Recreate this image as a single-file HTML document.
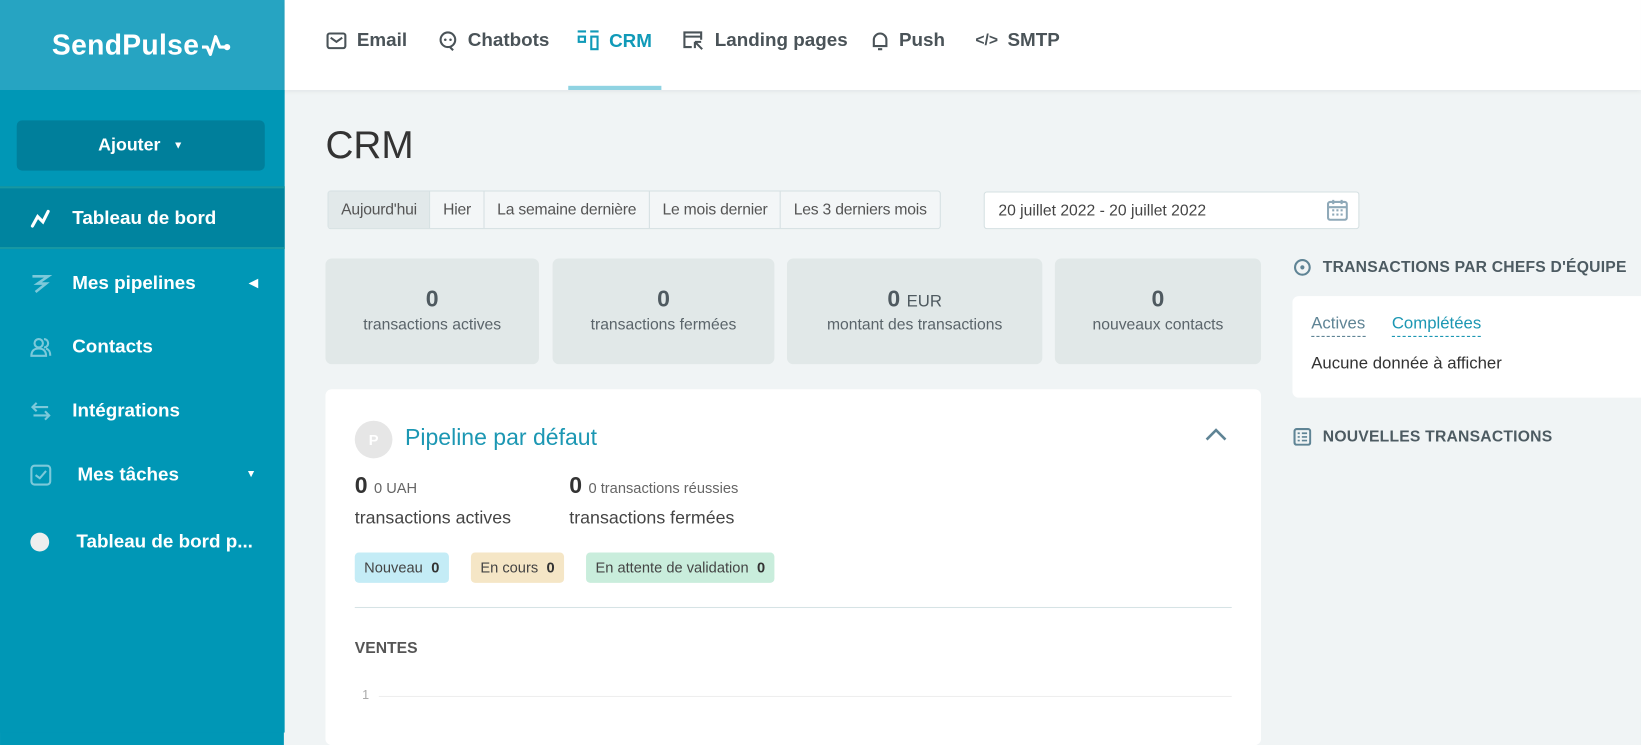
<!DOCTYPE html>
<html><head><meta charset="utf-8"><style>
*{box-sizing:border-box;margin:0;padding:0}
html,body{width:1641px;height:712px;overflow:hidden;background:linear-gradient(to right,#0097b6 0,#0097b6 284px,#f0f4f5 284px)}
body{font-family:"Liberation Sans",sans-serif}
#w{position:absolute;left:0;top:0;width:1568px;height:681px;transform:scale(1.0465);transform-origin:0 0}
.sb{position:absolute;left:0;top:0;width:272px;height:700px;background:#0097b6}
.logo{height:86px;background:#26a4c2;color:#fff;font-weight:bold;font-size:27px;display:flex;align-items:center;justify-content:center;letter-spacing:0.3px}
.add{position:absolute;left:16px;top:115px;width:237px;height:48px;background:#007f9b;border-radius:5px;color:#fff;font-weight:bold;font-size:17px;display:flex;align-items:center;justify-content:center}
.item{position:absolute;left:0;width:272px;height:60px;color:#fff;font-weight:bold;font-size:18px;display:flex;align-items:center}
.item .ic{position:absolute;left:28px;top:20px}
.item span{position:absolute;left:69px}
.act{background:#00849f;border-top:2px solid #1798a3;border-bottom:2px solid #1798a3}
.top{position:absolute;left:272px;top:0;width:1296px;height:86px;background:#fff;box-shadow:0 2px 4px rgba(0,0,0,.05)}
.nav{position:absolute;top:28px;font-size:18px;font-weight:bold;color:#4a5358;display:flex;align-items:center;gap:9px}
.h1{position:absolute;left:311px;top:118px;font-size:37px;color:#333;font-weight:normal}
.seg{position:absolute;left:313px;top:182px;height:37px;display:flex;border:1px solid #d5e0e2;border-radius:3px;background:#f3f6f7}
.seg div{padding:0 12px;line-height:35px;font-size:15px;color:#555;border-left:1px solid #d5e0e2;letter-spacing:-0.2px}
.seg div:first-child{border-left:0;background:#e2e9ea}
.date{position:absolute;left:940px;top:183px;width:359px;height:36px;background:#fff;border:1px solid #d5e0e2;border-radius:3px;font-size:15px;color:#444;padding:9px 13px}
.st{position:absolute;top:247px;height:101px;background:#e1e8e8;border-radius:6px;text-align:center;color:#5a646a}
.st b{display:block;margin-top:26px;font-size:22px;color:#4f5a60}
.st b small{font-weight:normal;font-size:16px}
.st p{font-size:15px;margin-top:3px}
.card{position:absolute;left:311px;top:372px;width:894px;height:340px;background:#fff;border-radius:6px}
.tag{position:absolute;top:528px;height:29px;border-radius:4px;font-size:14px;color:#444;line-height:29px;padding:0 9px}
.tag b{margin-left:8px;color:#333}
.rh{position:absolute;left:1236px;font-size:15px;font-weight:bold;color:#4d5b62;letter-spacing:0.2px}
.rc{position:absolute;left:1235px;top:283px;width:340px;height:97px;background:#fff;border-radius:6px}
</style></head><body><div id="w">
<div class="sb">
<div class="logo">SendPulse<svg width="30" height="26" viewBox="0 0 30 26" style="margin-left:2px"><path d="M1 15 L6 15 L9 22 L14 5 L18 15 L24 15" fill="none" stroke="#fff" stroke-width="3" stroke-linejoin="round"/><circle cx="25" cy="15" r="3" fill="#fff"/></svg></div>
<div class="add">Ajouter<span style="margin-left:12px;font-size:10px">▼</span></div>
<div class="item act" style="top:178px"><svg class="ic" width="22" height="22" viewBox="0 0 22 22" style="top:18px"><path d="M3 18 L8 9 L13 14 L18 4" fill="none" stroke="#fff" stroke-width="3" stroke-linecap="round"/></svg><span>Tableau de bord</span></div>
<div class="item" style="top:240px"><svg class="ic" width="22" height="22"><path d="M3 4H18L8 11H16L6 19" fill="none" stroke="#7cc9da" stroke-width="2.5"/></svg><span>Mes pipelines</span><span style="left:238px;font-size:11px">◀</span></div>
<div class="item" style="top:301px"><svg class="ic" width="22" height="22"><circle cx="9" cy="7" r="4" fill="none" stroke="#7cc9da" stroke-width="2"/><path d="M2 19c0-5 3-7 7-7s7 2 7 7z" fill="none" stroke="#7cc9da" stroke-width="2"/><path d="M14 3a4 4 0 0 1 0 8M16 12c3 1 4 3 4 7" fill="none" stroke="#7cc9da" stroke-width="2"/></svg><span>Contacts</span></div>
<div class="item" style="top:362px"><svg class="ic" width="22" height="22"><path d="M3 7H18M7 3L3 7L7 11M19 15H4M15 11L19 15L15 19" fill="none" stroke="#7cc9da" stroke-width="2"/></svg><span>Intégrations</span></div>
<div class="item" style="top:423px"><svg class="ic" width="22" height="22"><rect x="2" y="2" width="18" height="18" rx="3" fill="none" stroke="#7cc9da" stroke-width="2"/><path d="M6 11L10 14L16 7" fill="none" stroke="#7cc9da" stroke-width="2"/></svg><span style="left:74px">Mes tâches</span><span style="left:235px;font-size:10px">▼</span></div>
<div class="item" style="top:487px"><svg class="ic" width="22" height="22"><circle cx="10" cy="11" r="9" fill="#eee"/></svg><span style="left:73px">Tableau de bord p...</span></div>
</div>
<div class="top">
<div class="nav" style="left:40px"><svg width="20" height="18"><rect x="1" y="2" width="17" height="14" rx="2" fill="none" stroke="#4a5358" stroke-width="2"/><path d="M4 6L9.5 10L15 6" fill="none" stroke="#4a5358" stroke-width="2"/></svg>Email</div>
<div class="nav" style="left:146px"><svg width="20" height="20"><circle cx="10" cy="9" r="7" fill="none" stroke="#4a5358" stroke-width="2"/><circle cx="7.5" cy="9" r="1.2" fill="#4a5358"/><circle cx="12.5" cy="9" r="1.2" fill="#4a5358"/><path d="M12 16L15 19" stroke="#4a5358" stroke-width="2"/></svg>Chatbots</div>
<div class="nav" style="left:279px;color:#109ab8"><svg width="22" height="22"><path d="M1 2H9M13 2H21" stroke="#109ab8" stroke-width="2"/><rect x="2" y="7" width="6" height="5" fill="none" stroke="#109ab8" stroke-width="2"/><rect x="14" y="7" width="6" height="12" fill="none" stroke="#109ab8" stroke-width="2"/></svg>CRM</div>
<div style="position:absolute;left:271px;top:82px;width:89px;height:4px;background:#8fd3e2"></div>
<div class="nav" style="left:380px"><svg width="22" height="20"><path d="M9 16H2V2H18V9M2 6H18" fill="none" stroke="#4a5358" stroke-width="2"/><path d="M12 11L19 18M12 11V17M12 11H18" fill="none" stroke="#4a5358" stroke-width="2"/></svg>Landing pages</div>
<div class="nav" style="left:560px"><svg width="18" height="20"><path d="M3 15V9a6 6 0 0 1 12 0v6H2h14M7 18h4" fill="none" stroke="#4a5358" stroke-width="2"/></svg>Push</div>
<div class="nav" style="left:660px"><span style="font-size:15px">&lt;/&gt;</span>SMTP</div>
</div>
<div class="h1">CRM</div>
<div class="seg"><div>Aujourd'hui</div><div>Hier</div><div>La semaine dernière</div><div>Le mois dernier</div><div>Les 3 derniers mois</div></div>
<div class="date">20 juillet 2022 - 20 juillet 2022<svg width="20" height="22" viewBox="0 0 20 22" style="position:absolute;right:10px;top:6px"><rect x="1" y="3" width="18" height="17" rx="2" fill="none" stroke="#8fa9b8" stroke-width="2"/><path d="M1 8H19M6 1V5M14 1V5" stroke="#8fa9b8" stroke-width="2"/><path d="M5 11h2M9 11h2M13 11h2M5 15h2M9 15h2M13 15h2" stroke="#8fa9b8" stroke-width="2"/></svg></div>
<div class="st" style="left:311px;width:204px"><b>0</b><p>transactions actives</p></div>
<div class="st" style="left:528px;width:212px"><b>0</b><p>transactions fermées</p></div>
<div class="st" style="left:752px;width:244px"><b>0 <small>EUR</small></b><p>montant des transactions</p></div>
<div class="st" style="left:1008px;width:197px"><b>0</b><p>nouveaux contacts</p></div>
<div class="card"></div>
<div style="position:absolute;left:339px;top:402px;width:36px;height:36px;border-radius:50%;background:#e6e6e6;color:#fff;font-weight:bold;font-size:14px;text-align:center;line-height:36px">P</div>
<div style="position:absolute;left:387px;top:405px;font-size:22px;color:#1c97b3">Pipeline par défaut</div>
<svg style="position:absolute;left:1151px;top:408px" width="22" height="14"><path d="M2 12L11 3L20 12" fill="none" stroke="#5f8495" stroke-width="2.5"/></svg>
<div style="position:absolute;left:339px;top:451px;font-size:22px;font-weight:bold;color:#333">0 <span style="font-size:14px;font-weight:normal;color:#666">0 UAH</span></div>
<div style="position:absolute;left:339px;top:485px;font-size:17px;color:#444">transactions actives</div>
<div style="position:absolute;left:544px;top:451px;font-size:22px;font-weight:bold;color:#333">0 <span style="font-size:14px;font-weight:normal;color:#666">0 transactions réussies</span></div>
<div style="position:absolute;left:544px;top:485px;font-size:17px;color:#444">transactions fermées</div>
<div class="tag" style="left:339px;background:#c4ecf6">Nouveau<b>0</b></div>
<div class="tag" style="left:450px;background:#f5e6c6">En cours<b>0</b></div>
<div class="tag" style="left:560px;background:#c9eddc">En attente de validation<b>0</b></div>
<div style="position:absolute;left:339px;top:580px;width:838px;height:1px;background:#d6e3e5"></div>
<div style="position:absolute;left:339px;top:611px;font-size:15px;font-weight:bold;color:#555">VENTES</div>
<div style="position:absolute;left:346px;top:657px;font-size:12px;color:#aaa">1</div>
<div style="position:absolute;left:362px;top:665px;width:815px;height:1px;background:#eee"></div>
<svg style="position:absolute;left:1236px;top:247px" width="17" height="17"><circle cx="8.5" cy="8.5" r="7" fill="none" stroke="#5f8495" stroke-width="2"/><circle cx="8.5" cy="8.5" r="2" fill="#5f8495"/></svg>
<div class="rh" style="left:1264px;top:247px">TRANSACTIONS PAR CHEFS D'ÉQUIPE</div>
<div class="rc"></div>
<div style="position:absolute;left:1253px;top:301px;font-size:16px;color:#5f8495;border-bottom:1px dashed #5f8495;padding-bottom:2px">Actives</div>
<div style="position:absolute;left:1330px;top:301px;font-size:16px;color:#1c97b3;border-bottom:1px dashed #1c97b3;padding-bottom:2px">Complétées</div>
<div style="position:absolute;left:1253px;top:339px;font-size:16px;color:#333">Aucune donnée à afficher</div>
<svg style="position:absolute;left:1236px;top:409px" width="17" height="17"><rect x="1" y="1" width="15" height="15" rx="2" fill="none" stroke="#5f8495" stroke-width="2"/><path d="M4 5h2M8 5h5M4 8.5h2M8 8.5h5M4 12h2M8 12h5" stroke="#5f8495" stroke-width="1.6"/></svg>
<div class="rh" style="left:1264px;top:409px">NOUVELLES TRANSACTIONS</div>
</div></body></html>
